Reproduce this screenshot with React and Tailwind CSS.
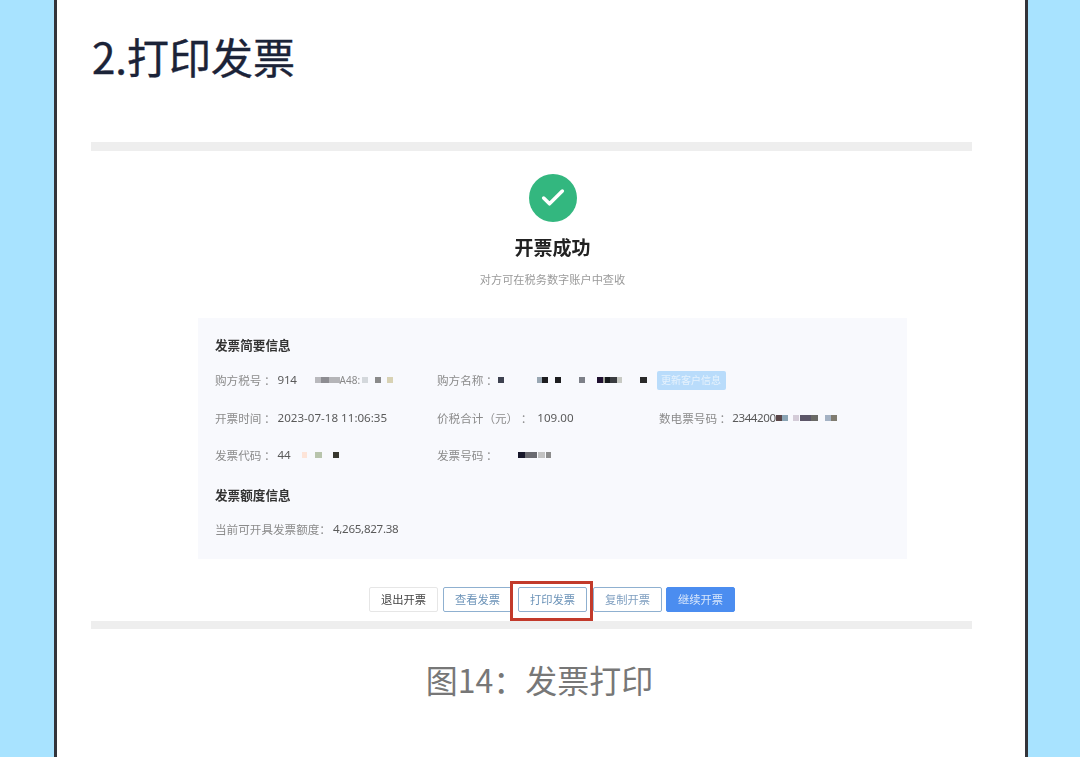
import { Check } from "lucide-react";

const font = "font-['Noto_Sans_CJK_SC','Noto_Sans',sans-serif]";

function Px({ className }) {
  return <span className={`inline-block shrink-0 h-[6px] ${className}`} />;
}

function Field({ label, children }) {
  return (
    <div className="flex items-center h-[18px] whitespace-pre">
      <span className="text-[#8b8b8b]">{label}</span>
      <span className="text-[#5a5a5a] font-['Noto_Sans','Liberation_Sans',sans-serif] flex items-center">
        {children}
      </span>
    </div>
  );
}

function ActionButton({ children, className }) {
  return (
    <button className={`w-[69px] h-[25px] rounded-[2px] border text-[11.3px] leading-none ${className}`}>
      {children}
    </button>
  );
}

export default function App() {
  return (
    <div className={`h-[757px] w-[1080px] overflow-hidden bg-[#a8e3ff] pl-[54px] pr-[52px] ${font}`}>
      <div className="h-full border-x-[3px] border-[#33343a] bg-white">
        {/* Heading */}
        <h1 className="pl-[35px] pt-[26px] h-[142px] text-[42px] leading-[60px] font-normal text-[#1b2338] [-webkit-text-stroke:0.4px_#1b2338]">
          2.打印发票
        </h1>

        {/* Pasted screenshot */}
        <div className="ml-[34px] w-[881px] blur-[0.6px]">
          <div className="h-[9px] bg-[#eeeeee]" />

          <div className="ml-[107px] flex w-[709px] flex-col items-center pt-[23px]">
            <div className="flex h-[48px] w-[48px] items-center justify-center rounded-full bg-[#33b77f]">
              <Check className="h-[28px] w-[28px] text-white" strokeWidth={3} />
            </div>
            <div className="mt-[11px] text-[19px] leading-[28px] font-bold text-[#222222]">开票成功</div>
            <div className="mt-[10px] text-[11.2px] leading-[16px] text-[#9a9a9a]">对方可在税务数字账户中查收</div>
          </div>

          {/* Summary panel */}
          <div className="mt-[31px] ml-[107px] h-[241px] w-[709px] bg-[#f8f9fd] pl-[17px] pt-[18px] text-[11.6px] leading-[18px]">
            <div className="text-[12.6px] font-bold text-[#333333]">发票简要信息</div>

            <div className="mt-[17px] grid grid-cols-[222px_222px_1fr] grid-rows-[18px_18px_18px] gap-y-[19.5px]">
              <Field label="购方税号 ：">
                <span className="ml-[2px] tracking-[-0.3px]">914</span>
                <Px className="ml-[18px] w-[6px] bg-[#b9b9bd]" />
                <Px className="w-[8px] bg-[#8d8d92]" />
                <Px className="w-[11px] bg-[#b5b5b8]" />
                <span className="text-[10px] text-[#888888]">A48:</span>
                <Px className="ml-[2px] w-[6px] bg-[#d4d8dc]" />
                <Px className="ml-[7px] w-[6px] bg-[#8a8a8a]" />
                <Px className="ml-[6px] w-[6px] bg-[#d8d2b4]" />
              </Field>
              <div className="col-span-2 flex items-center whitespace-pre">
                <span className="text-[#8b8b8b]">购方名称 ：</span>
                <Px className="w-[6px] bg-[#3e4250]" />
                <Px className="ml-[33px] w-[5px] bg-[#9aa8b4]" />
                <Px className="w-[6px] bg-[#1d1d20]" />
                <Px className="ml-[7px] w-[6px] bg-[#1d1d20]" />
                <Px className="ml-[18px] w-[6px] bg-[#7d8088]" />
                <Px className="ml-[12px] w-[6px] bg-[#1f1030]" />
                <Px className="w-[2px] bg-[#a0a298]" />
                <Px className="w-[5px] bg-[#151a1c]" />
                <Px className="w-[7px] bg-[#3a3c40]" />
                <Px className="w-[5px] bg-[#c8cac4]" />
                <Px className="ml-[18px] w-[7px] bg-[#2a2a2a]" />
                <span className="ml-[10px] flex h-[19px] w-[69px] items-center justify-center rounded-[2px] bg-[#b9dcfb] text-[10px] text-[#e6f2fd]">
                  更新客户信息
                </span>
              </div>

              <Field label="开票时间 ：">
                <span className="ml-[2px]">2023-07-18 11:06:35</span>
              </Field>
              <Field label="价税合计（元） ：">
                <span className="ml-[5px]">109.00</span>
              </Field>
              <Field label="数电票号码 ：">
                <span className="ml-[1px] tracking-[-0.4px]">2344200</span>
                <Px className="w-[6px] bg-[#5a4648]" />
                <Px className="w-[6px] bg-[#8aa4b4]" />
                <Px className="ml-[5px] w-[6px] bg-[#d4ccd8]" />
                <Px className="ml-[1px] w-[11px] bg-[#5c5668]" />
                <Px className="w-[7px] bg-[#6a6a66]" />
                <Px className="ml-[7px] w-[6px] bg-[#a4b2c4]" />
                <Px className="w-[6px] bg-[#807c70]" />
              </Field>

              <Field label="发票代码 ：">
                <span className="ml-[2px] tracking-[-0.3px]">44</span>
                <Px className="ml-[12px] w-[5px] bg-[#fde4d8]" />
                <Px className="ml-[8px] w-[7px] bg-[#b8c4ac]" />
                <Px className="ml-[11px] w-[6px] bg-[#38382f]" />
              </Field>
              <Field label="发票号码 ：">
                <Px className="ml-[20px] w-[7px] bg-[#17172a]" />
                <Px className="w-[12px] bg-[#6a6a70]" />
                <Px className="ml-[1px] w-[7px] bg-[#c2c2c2]" />
                <Px className="ml-[1px] w-[5px] bg-[#8c8c8c]" />
              </Field>
            </div>

            <div className="mt-[22px] text-[12.6px] font-bold text-[#333333]">发票额度信息</div>
            <div className="mt-[16px]">
              <Field label="当前可开具发票额度：">
                <span className="ml-[2px] tracking-[-0.3px]">4,265,827.38</span>
              </Field>
            </div>
          </div>

          {/* Actions */}
          <div className="relative mt-[28px] ml-[278px] flex w-[366px] gap-[5px]">
            <ActionButton className="border-[#e6e6e6] bg-white text-[#444444]">退出开票</ActionButton>
            <ActionButton className="border-[#8fb0d0] bg-white text-[#6c93b8]">查看发票</ActionButton>
            <ActionButton className="ml-[1px] border-[#8fb0d0] bg-white text-[#6c93b8]">打印发票</ActionButton>
            <ActionButton className="ml-[1px] border-[#8fb0d0] bg-white text-[#7f9fc0]">复制开票</ActionButton>
            <ActionButton className="-ml-[1px] border-[#4b8df0] bg-[#4b8df0] text-[#d7e6fb]">继续开票</ActionButton>
            <div className="absolute left-[141px] -top-[6px] h-[40px] w-[83px] border-[3px] border-[#c23a2b]" />
          </div>

          <div className="mt-[9px] h-[8px] bg-[#eeeeee]" />
        </div>

        <div className="mt-[25px] text-center text-[32px] leading-[50px] text-[#777777] -ml-[3px]">图14：发票打印</div>
      </div>
    </div>
  );
}
